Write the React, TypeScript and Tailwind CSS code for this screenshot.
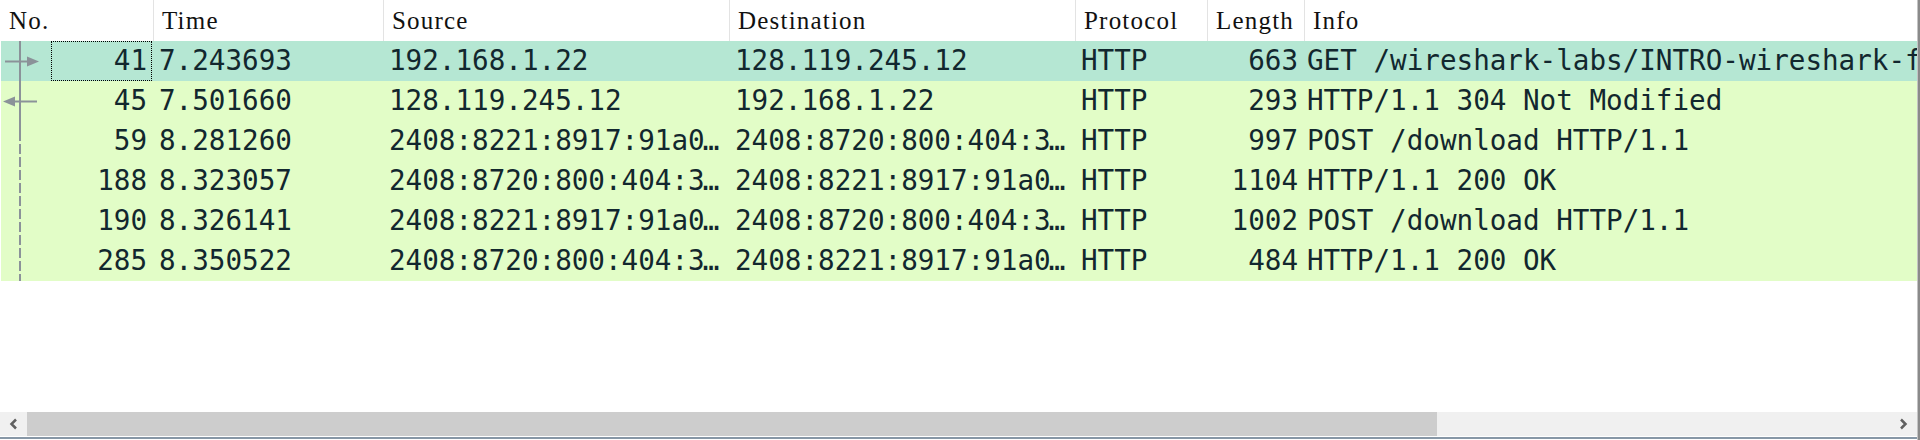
import React from 'react';

interface Packet {
  no: number;
  time: string;
  source: string;
  destination: string;
  protocol: string;
  length: number;
  info: string;
}

const packets: Packet[] = [
  { no: 41, time: '7.243693', source: '192.168.1.22', destination: '128.119.245.12', protocol: 'HTTP', length: 663, info: 'GET /wireshark-labs/INTRO-wireshark-file1.html HTTP/1.1' },
  { no: 45, time: '7.501660', source: '128.119.245.12', destination: '192.168.1.22', protocol: 'HTTP', length: 293, info: 'HTTP/1.1 304 Not Modified' },
  { no: 59, time: '8.281260', source: '2408:8221:8917:91a0…', destination: '2408:8720:800:404:3…', protocol: 'HTTP', length: 997, info: 'POST /download HTTP/1.1' },
  { no: 188, time: '8.323057', source: '2408:8720:800:404:3…', destination: '2408:8221:8917:91a0…', protocol: 'HTTP', length: 1104, info: 'HTTP/1.1 200 OK' },
  { no: 190, time: '8.326141', source: '2408:8221:8917:91a0…', destination: '2408:8720:800:404:3…', protocol: 'HTTP', length: 1002, info: 'POST /download HTTP/1.1' },
  { no: 285, time: '8.350522', source: '2408:8720:800:404:3…', destination: '2408:8221:8917:91a0…', protocol: 'HTTP', length: 484, info: 'HTTP/1.1 200 OK' },
];

const headFont = { fontFamily: '"Liberation Serif", "Noto Sans CJK SC", serif' };
const monoFont = { fontFamily: '"DejaVu Sans Mono", "Liberation Mono", monospace' };

// elided addresses: pull the ellipsis in a little, like the Qt elide glyph
const Addr: React.FC<{ text: string }> = ({ text }) =>
  text.endsWith('…') ? (
    <>
      {text.slice(0, -1)}
      <span className="ml-[-2px]">…</span>
    </>
  ) : (
    <>{text}</>
  );

// related-packet markers drawn over the No. column
const RelatedMarks: React.FC = () => (
  <svg className="absolute left-0 top-0 pointer-events-none" width="45" height="240" viewBox="0 0 45 240">
    <line x1="20" y1="0" x2="20" y2="90" stroke="#8b9299" strokeWidth="2" />
    <line x1="20" y1="90" x2="20" y2="240" stroke="#8b9299" strokeWidth="2" strokeDasharray="10 3" />
    <line x1="5" y1="20.5" x2="28" y2="20.5" stroke="#8b9299" strokeWidth="2" />
    <polygon points="27,15.5 39,20.5 27,25.5" fill="#8b9299" />
    <line x1="14" y1="60.5" x2="37" y2="60.5" stroke="#8b9299" strokeWidth="2" />
    <polygon points="3,60.5 15,55.5 15,65.5" fill="#8b9299" />
  </svg>
);

const App: React.FC = () => {
  return (
    <div className="w-[1920px] h-[440px] flex bg-white overflow-hidden">
      <div className="flex-1 flex flex-col overflow-hidden">
        {/* header */}
        <div className="h-[41px] flex pl-px text-[25px] tracking-[1.2px] text-[#111]" style={headFont}>
          <div className="w-[152px] shrink-0 flex items-center pl-2">No.</div>
          <div className="w-[230px] shrink-0 flex items-center pl-2 border-l border-[#e3e3e3]">Time</div>
          <div className="w-[346px] shrink-0 flex items-center pl-2 border-l border-[#e3e3e3]">Source</div>
          <div className="w-[346px] shrink-0 flex items-center pl-2 border-l border-[#e3e3e3]">Destination</div>
          <div className="w-[132px] shrink-0 flex items-center pl-2 border-l border-[#e3e3e3]">Protocol</div>
          <div className="w-[97px] shrink-0 flex items-center pl-2 border-l border-[#e3e3e3]">Length</div>
          <div className="flex-1 flex items-center pl-2 border-l border-[#e3e3e3]">Info</div>
        </div>

        {/* packet rows */}
        <div className="relative pl-px text-[27.6px] text-[#12272e]" style={monoFont}>
          {packets.map((p, i) => (
            <div
              key={p.no}
              className={`h-[40px] flex items-center whitespace-nowrap ${i === 0 ? 'bg-[#b5e7d3]' : 'bg-[#e2fdc7]'}`}
            >
              <div className="relative w-[152px] shrink-0 h-full flex items-center justify-end pr-[6px]">
                {i === 0 && <div className="absolute left-[50px] right-[1px] top-0 bottom-0 border border-dotted border-black" />}
                {p.no}
              </div>
              <div className="w-[230px] shrink-0 px-[6px] overflow-hidden">{p.time}</div>
              <div className="w-[346px] shrink-0 px-[6px] overflow-hidden"><Addr text={p.source} /></div>
              <div className="w-[346px] shrink-0 px-[6px] overflow-hidden"><Addr text={p.destination} /></div>
              <div className="w-[132px] shrink-0 px-[6px] overflow-hidden">{p.protocol}</div>
              <div className="w-[97px] shrink-0 pr-[6px] text-right overflow-hidden">{p.length}</div>
              <div className="flex-1 pl-[3px] overflow-hidden">{p.info}</div>
            </div>
          ))}
          <RelatedMarks />
        </div>

        <div className="flex-1" />

        {/* horizontal scrollbar */}
        <div className="h-[24px] flex bg-[#f0f0f0]">
          <div className="w-[27px] flex items-center justify-center">
            <svg width="9" height="12" viewBox="0 0 9 12">
              <polyline points="7,1.5 2.5,6 7,10.5" fill="none" stroke="#606060" strokeWidth="2.5" />
            </svg>
          </div>
          <div className="w-[1410px] bg-[#cdcdcd]" />
          <div className="flex-1" />
          <div className="w-[27px] flex items-center justify-center">
            <svg width="9" height="12" viewBox="0 0 9 12">
              <polyline points="2,1.5 6.5,6 2,10.5" fill="none" stroke="#606060" strokeWidth="2.5" />
            </svg>
          </div>
        </div>
        <div className="h-px" />
        <div className="h-[2px] bg-[#8797a6]" />
        <div className="h-px" />
      </div>
      <div className="w-[3px] flex">
        <div className="w-px bg-[#c4c4c4]" />
        <div className="w-[2px] bg-[#8a8a8a]" />
      </div>
    </div>
  );
};

export default App;
